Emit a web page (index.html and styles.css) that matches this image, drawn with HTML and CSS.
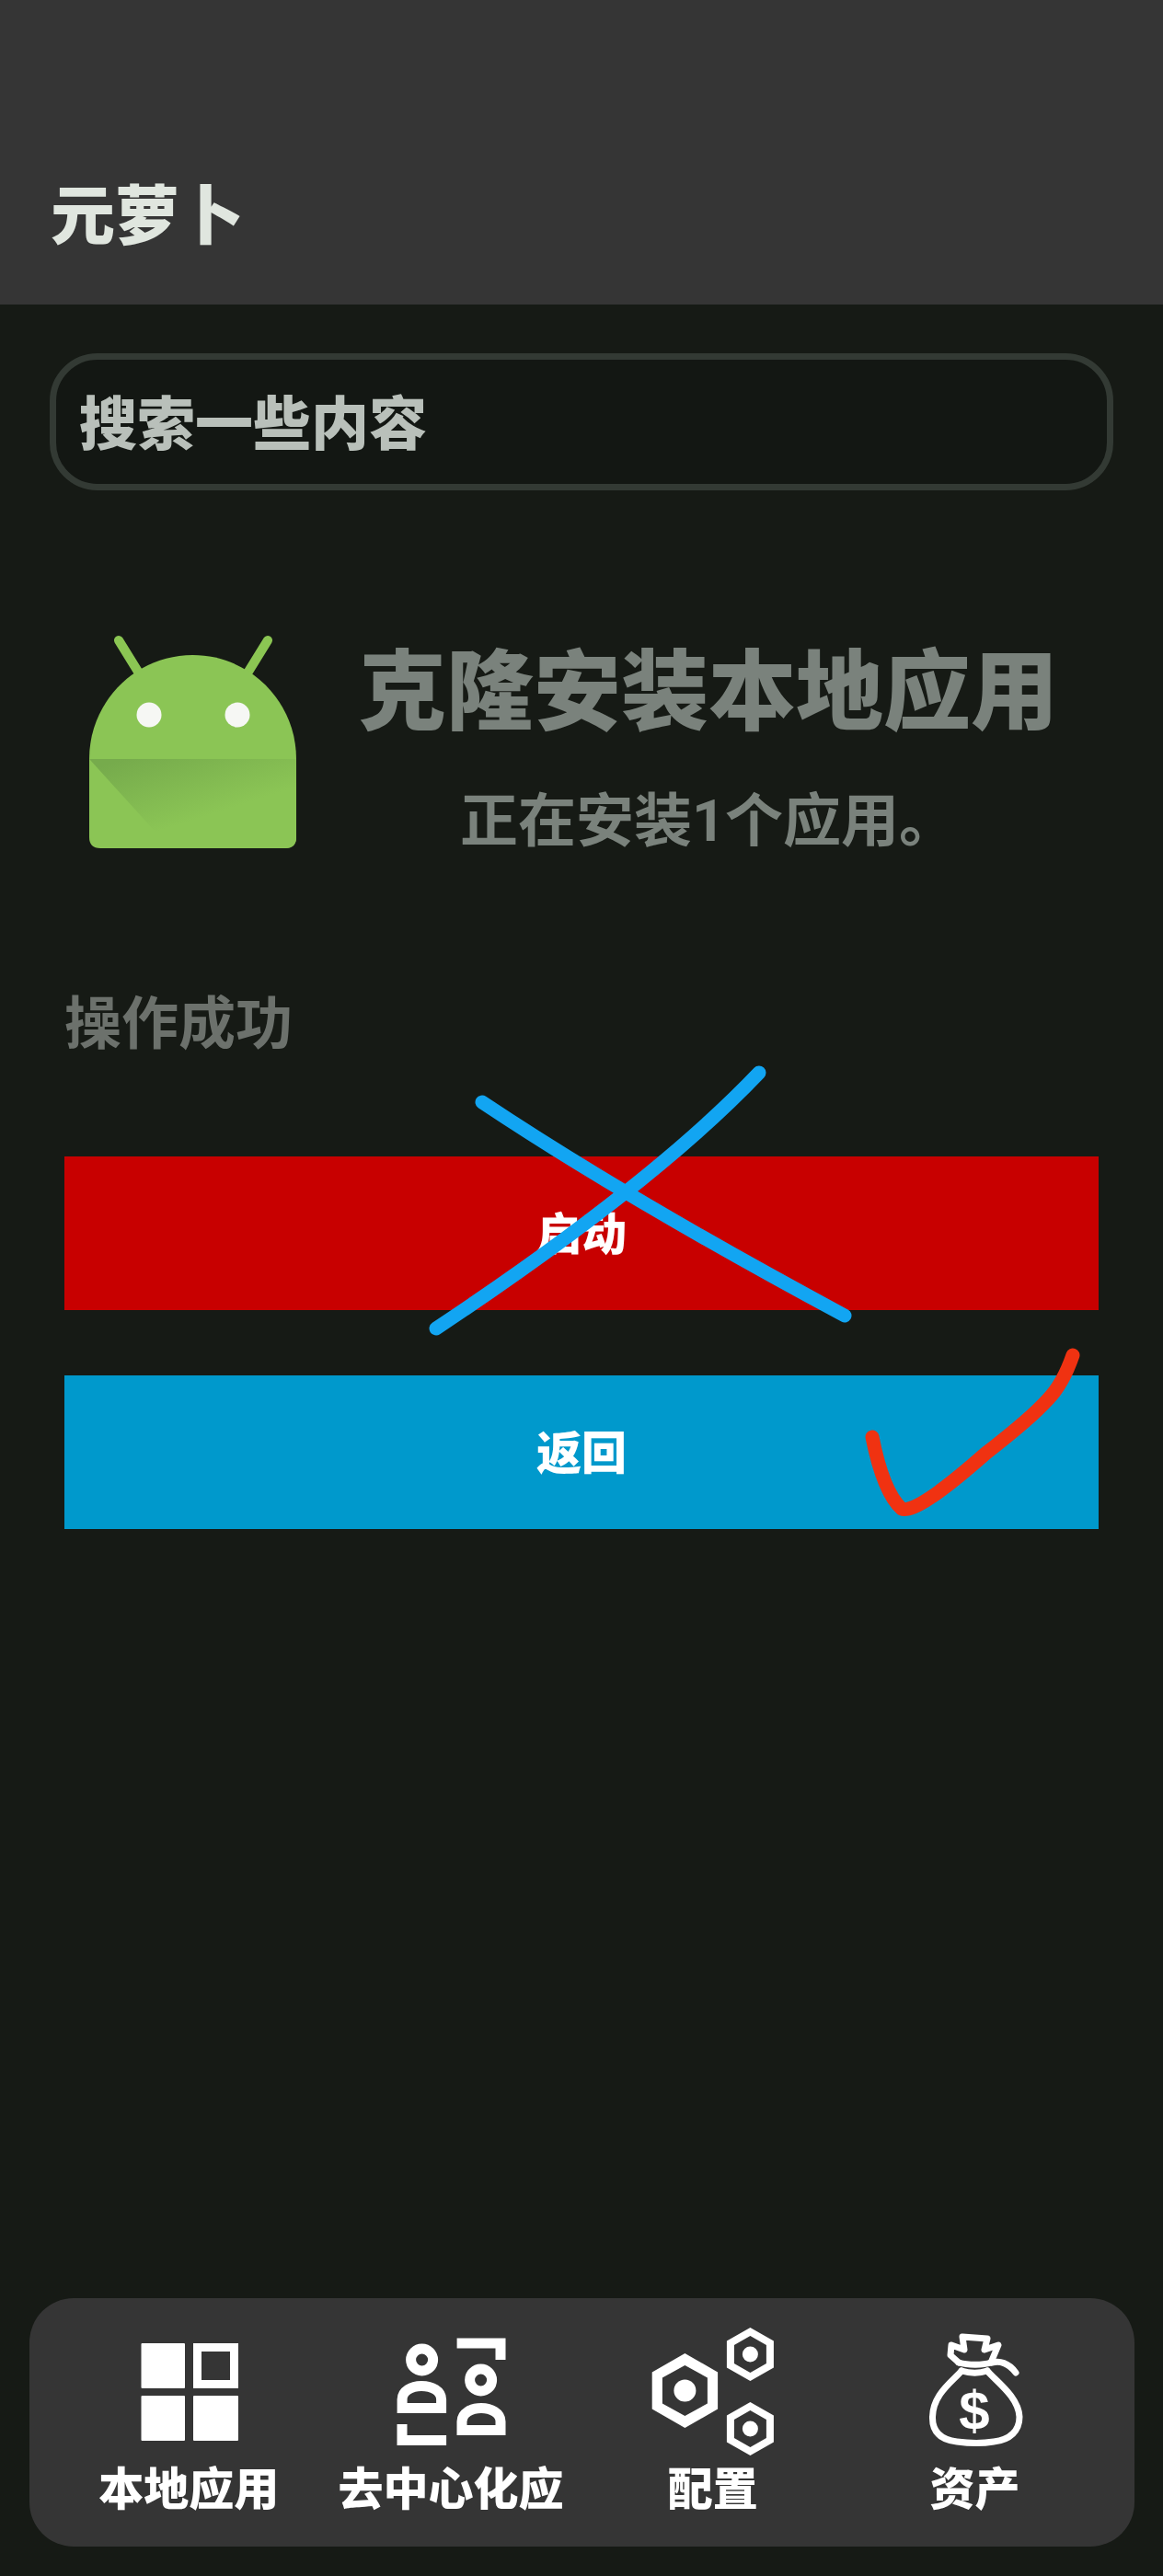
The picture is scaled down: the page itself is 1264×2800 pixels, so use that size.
FILE: index.html
```html
<!DOCTYPE html>
<html lang="zh-CN">
<head>
  <meta charset="UTF-8">
  <meta name="viewport" content="width=device-width, initial-scale=1.0">
  <title>元萝卜</title>
  <link rel="stylesheet" href="styles.css">
</head>
<body>
  <div class="topbar">
    <div class="topbar-title">元萝卜</div>
  </div>

  <div class="search-box">搜索一些内容</div>

  <div class="install-row">
    <svg class="android-icon" viewBox="0 0 225 232">
      <defs>
        <linearGradient id="fold" x1="0" y1="0" x2="0.6" y2="0.8">
          <stop offset="0.1" stop-color="#76ab4c"></stop>
          <stop offset="0.85" stop-color="#8bc555"></stop>
        </linearGradient>
      </defs>
      <path class="android-line" d="M32 6 L53 40 M194 6 L173 40"></path>
      <path class="android-body" d="M0 135 C0 73 50 22 112.5 22 C175 22 225 73 225 135 V220 Q225 232 213 232 H12 Q0 232 0 220 Z"></path>
      <path d="M0 135 H225 V220 Q225 232 213 232 H88 Z" fill="url(#fold)"></path>
      <circle class="android-eye" cx="65" cy="87" r="13.5"></circle>
      <circle class="android-eye" cx="161" cy="87" r="13.5"></circle>
    </svg>
    <div class="install-text">
      <div class="install-title">克隆安装本地应用</div>
      <div class="install-sub">正在安装1个应用。</div>
    </div>
  </div>

  <div class="status">操作成功</div>

  <div class="actions">
    <div class="btn btn-start">启动</div>
    <div class="btn btn-back">返回</div>
    <!-- hand drawn marks on top of the buttons -->
    <svg class="marks" viewBox="0 -100 1124 600">
      <path class="mark-cross" d="M454 -59 Q610 45 848 173 M755 -91 Q640 30 404 187"></path>
      <path class="mark-check" d="M878 305 Q890 365 910 383 Q925 390 1001 323 Q1050 285 1068 265 Q1085 248 1096 216"></path>
    </svg>
  </div>

  <div class="bottom-nav">
    <div class="nav-item">
      <svg class="nav-icon" viewBox="-70 -70 140 140">
        <rect class="solid" x="-51.5" y="-53" width="47.5" height="49" rx="1"></rect>
        <rect class="line-square" x="9.5" y="-48.5" width="40" height="40"></rect>
        <rect class="solid" x="-51.5" y="4" width="47.5" height="49" rx="1"></rect>
        <rect class="solid" x="5" y="4" width="49" height="49" rx="1"></rect>
      </svg>
      <div class="nav-label">本地应用</div>
    </div>
    <div class="nav-item">
      <svg class="nav-icon" viewBox="-70 -70 140 140">
        <g class="line-thick">
          <circle cx="-31.4" cy="-35" r="12"></circle>
          <path d="M-52.9 17.5 V8 C-52.9 -1 -43 -6.5 -32 -6.5 C-20 -6.5 -10.4 -1 -10.4 8 V17.5 Z"></path>
          <path d="M-53 35 V52.5 H-4.9"></path>
          <path d="M6.6 -53 H54 V-35"></path>
          <circle cx="32.6" cy="-13" r="12"></circle>
          <path d="M12 41.5 V32 C12 23 22 17.5 33 17.5 C44 17.5 54 23 54 32 V41.5 Z"></path>
        </g>
      </svg>
      <div class="nav-label">去中心化应</div>
    </div>
    <div class="nav-item">
      <svg class="nav-icon" viewBox="-70 -70 140 140">
        <path class="solid hex" transform="translate(-30.6 -1.5)" d="M0 -40.5 L35.7 -20 V20 L0 40.5 L-35.7 20 V-20 Z M0 -27.5 L-24.5 -14 V14 L0 27.5 L24.5 14 V-14 Z"></path>
        <circle class="solid" cx="-30.6" cy="-1.5" r="12"></circle>
        <path class="solid hex" transform="translate(40.4 -41)" d="M0 -29 L25.5 -14.5 V14.5 L0 29 L-25.5 14.5 V-14.5 Z M0 -20 L-17.5 -10 V10 L0 20 L17.5 10 V-10 Z"></path>
        <circle class="solid" cx="40.4" cy="-41" r="8.5"></circle>
        <path class="solid hex" transform="translate(40.4 40)" d="M0 -29 L25.5 -14.5 V14.5 L0 29 L-25.5 14.5 V-14.5 Z M0 -20 L-17.5 -10 V10 L0 20 L17.5 10 V-10 Z"></path>
        <circle class="solid" cx="40.4" cy="40" r="8.5"></circle>
      </svg>
      <div class="nav-label">配置</div>
    </div>
    <div class="nav-item">
      <svg class="nav-icon" viewBox="-70 -70 140 140">
        <g class="line-thin">
          <path d="M-15 -23 C-24 -12 -46 2 -46.5 27 C-47 44 -37 52 -20 54 C-5 56 8 56 20 54 C38 52 48 42 48 27 C47 5 22 -12 13 -23"></path>
          <path d="M-15 -23 C-5 -20 4 -20 13 -23"></path>
          <path d="M-18 -32 C-8 -29 8 -29 17 -32"></path>
          <path d="M-18 -32 L-27 -40 L-26 -51 L-12 -46 L-14 -60 L13 -58 L10 -46 L25 -51 L17 -32"></path>
          <path d="M19 -32 C26 -34 36 -32 44 -21"></path>
        </g>
        <text class="dollar" x="-1" y="41">$</text>
      </svg>
      <div class="nav-label">资产</div>
    </div>
  </div>
</body>
</html>
```

FILE: styles.css
```css
body {
  margin: 0;
  height: 100vh;
  background: #161a15;
  font-family: Roboto, "Noto Sans CJK SC", "Liberation Sans", sans-serif;
  display: flex;
  flex-direction: column;
  overflow: hidden;
}
.topbar {
  height: 331px;
  flex-shrink: 0;
  box-sizing: border-box;
  background: #353535;
  padding: 0 0 60px 55px;
  display: flex;
  align-items: flex-end;
}
.topbar-title {
  font-size: 70px;
  line-height: 70px;
  font-weight: 900;
  color: #e0e6df;
}
.search-box {
  margin: 53px 54px 0;
  height: 149px;
  box-sizing: border-box;
  border: 7px solid #333a34;
  border-radius: 52px;
  background: #131713;
  padding: 0 0 6px 25px;
  display: flex;
  align-items: center;
  font-size: 63px;
  font-weight: 900;
  color: #b9c0ba;
}
.install-row {
  margin-top: 157px;
  display: flex;
  padding-left: 97px;
}
.android-icon {
  width: 225px;
  height: 232px;
  flex-shrink: 0;
}
.android-line {
  fill: none;
  stroke: #8bc653;
  stroke-width: 10;
  stroke-linecap: round;
}
.android-body {
  fill: #8bc555;
}
.android-eye {
  fill: #f6f7f4;
}
.install-text {
  margin-left: 72px;
  width: 752px;
  padding-top: 16px;
  text-align: center;
  color: #7a827c;
}
.install-title {
  font-size: 95px;
  line-height: 95px;
  font-weight: 900;
  margin-left: -4px;
  margin-right: -4px;
}
.install-sub {
  margin-top: 60px;
  font-size: 63px;
  line-height: 63px;
  font-weight: 700;
}
.status {
  margin: 159px 0 0 70px;
  font-size: 62px;
  line-height: 62px;
  font-weight: 700;
  color: #6c716c;
}
.actions {
  margin: 112px 70px 0;
  display: flex;
  flex-direction: column;
  gap: 71px;
  position: relative;
}
.btn {
  height: 167px;
  box-sizing: border-box;
  padding-bottom: 6px;
  display: flex;
  align-items: center;
  justify-content: center;
  font-size: 49px;
  font-weight: 900;
  color: #fff;
}
.btn-start {
  background: #c80000;
}
.btn-back {
  background: #0099cc;
}
.marks {
  position: absolute;
  left: 0;
  top: -100px;
  width: 1124px;
  height: 600px;
  overflow: visible;
}
.mark-cross,
.mark-check {
  fill: none;
  stroke-linecap: round;
  stroke-linejoin: round;
}
.mark-cross {
  stroke: #12a5f2;
  stroke-width: 15;
}
.mark-check {
  stroke: #f03211;
  stroke-width: 15;
}
.bottom-nav {
  margin: auto 31px 32px 32px;
  height: 270px;
  box-sizing: border-box;
  background: #353535;
  border-radius: 48px;
  padding: 32px 31px 0;
  display: grid;
  grid-template-columns: repeat(4, 1fr);
}
.nav-item {
  display: flex;
  flex-direction: column;
  align-items: center;
}
.nav-icon {
  width: 140px;
  height: 140px;
}
.nav-label {
  margin-top: 12px;
  font-size: 49px;
  line-height: 49px;
  font-weight: 900;
  color: #fff;
  white-space: nowrap;
}
.solid {
  fill: #fff;
}
.hex {
  fill-rule: evenodd;
}
.line-square {
  fill: none;
  stroke: #fff;
  stroke-width: 9;
}
.line-thick {
  fill: none;
  stroke: #fff;
  stroke-width: 11;
}
.line-thin {
  fill: none;
  stroke: #fff;
  stroke-width: 7;
  stroke-linecap: round;
  stroke-linejoin: round;
}
.dollar {
  fill: #fff;
  font-family: "Liberation Sans", sans-serif;
  font-size: 60px;
  font-weight: 700;
  text-anchor: middle;
}
```
